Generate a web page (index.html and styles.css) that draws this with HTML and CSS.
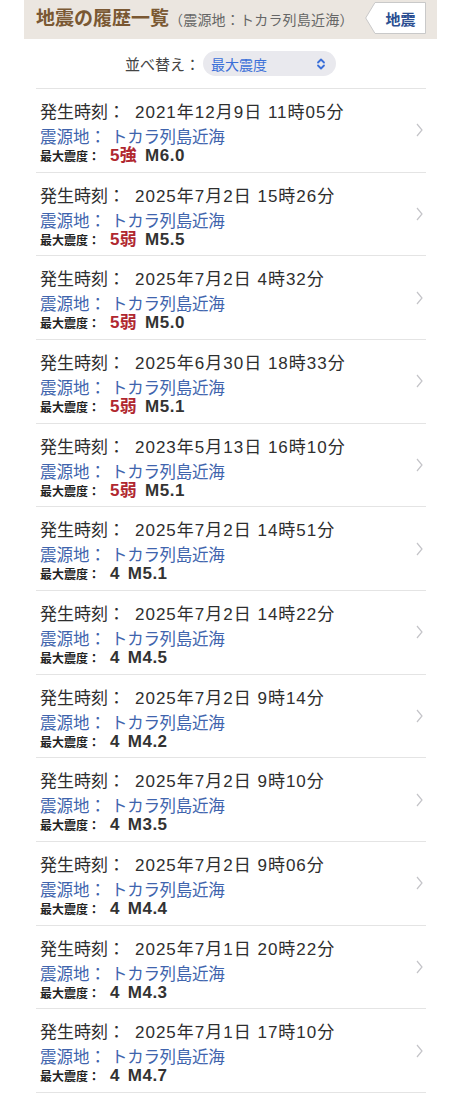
FILE: index.html
```html
<!DOCTYPE html>
<html lang="ja">
<head>
    <meta charset="UTF-8">
    <meta name="viewport" content="width=device-width, initial-scale=1.0">
    <title>地震の履歴一覧</title>
    <link rel="stylesheet" href="styles.css">
</head>
<body>
    <header class="page-head">
        <h1 class="title">地震の履歴一覧<span class="sub">（震源地：トカラ列島近海）</span></h1>
        <a class="tag" href="#">
            <svg class="tag-bg" viewBox="0 0 61 32" preserveAspectRatio="none">
                <polygon points="10,0.5 60.5,0.5 60.5,31.5 10,31.5 0.7,16" fill="#fff" stroke="#c9c9c9" stroke-width="1"/>
            </svg>
            <span class="tag-text">地震</span>
        </a>
    </header>

    <div class="sort">
        <span class="sort-label">並べ替え：</span>
        <div class="select">
            <span>最大震度</span>
            <svg class="updown" viewBox="0 0 10 12" width="10" height="12">
                <polyline points="2,4.5 5,1.5 8,4.5" fill="none" stroke="#3a6fd8" stroke-width="1.8" stroke-linecap="round" stroke-linejoin="round"/>
                <polyline points="2,7.5 5,10.5 8,7.5" fill="none" stroke="#3a6fd8" stroke-width="1.8" stroke-linecap="round" stroke-linejoin="round"/>
            </svg>
        </div>
    </div>

    <ul class="quakes">
        <li class="quake">
            <div class="info">
                <p class="time">発生時刻：<span class="val">2021年12月9日 11時05分</span></p>
                <p class="epi">震源地：<span class="val">トカラ列島近海</span></p>
                <p class="scale"><span class="lbl">最大震度：</span><span class="int high">5強</span><span class="mag">M6.0</span></p>
            </div>
            <svg class="chev" viewBox="0 0 7 14" width="7" height="14"><polyline points="1,1 6,7 1,13" fill="none" stroke="#c4c4c8" stroke-width="1.2"/></svg>
        </li>
        <li class="quake">
            <div class="info">
                <p class="time">発生時刻：<span class="val">2025年7月2日 15時26分</span></p>
                <p class="epi">震源地：<span class="val">トカラ列島近海</span></p>
                <p class="scale"><span class="lbl">最大震度：</span><span class="int high">5弱</span><span class="mag">M5.5</span></p>
            </div>
            <svg class="chev" viewBox="0 0 7 14" width="7" height="14"><polyline points="1,1 6,7 1,13" fill="none" stroke="#c4c4c8" stroke-width="1.2"/></svg>
        </li>
        <li class="quake">
            <div class="info">
                <p class="time">発生時刻：<span class="val">2025年7月2日 4時32分</span></p>
                <p class="epi">震源地：<span class="val">トカラ列島近海</span></p>
                <p class="scale"><span class="lbl">最大震度：</span><span class="int high">5弱</span><span class="mag">M5.0</span></p>
            </div>
            <svg class="chev" viewBox="0 0 7 14" width="7" height="14"><polyline points="1,1 6,7 1,13" fill="none" stroke="#c4c4c8" stroke-width="1.2"/></svg>
        </li>
        <li class="quake">
            <div class="info">
                <p class="time">発生時刻：<span class="val">2025年6月30日 18時33分</span></p>
                <p class="epi">震源地：<span class="val">トカラ列島近海</span></p>
                <p class="scale"><span class="lbl">最大震度：</span><span class="int high">5弱</span><span class="mag">M5.1</span></p>
            </div>
            <svg class="chev" viewBox="0 0 7 14" width="7" height="14"><polyline points="1,1 6,7 1,13" fill="none" stroke="#c4c4c8" stroke-width="1.2"/></svg>
        </li>
        <li class="quake">
            <div class="info">
                <p class="time">発生時刻：<span class="val">2023年5月13日 16時10分</span></p>
                <p class="epi">震源地：<span class="val">トカラ列島近海</span></p>
                <p class="scale"><span class="lbl">最大震度：</span><span class="int high">5弱</span><span class="mag">M5.1</span></p>
            </div>
            <svg class="chev" viewBox="0 0 7 14" width="7" height="14"><polyline points="1,1 6,7 1,13" fill="none" stroke="#c4c4c8" stroke-width="1.2"/></svg>
        </li>
        <li class="quake">
            <div class="info">
                <p class="time">発生時刻：<span class="val">2025年7月2日 14時51分</span></p>
                <p class="epi">震源地：<span class="val">トカラ列島近海</span></p>
                <p class="scale"><span class="lbl">最大震度：</span><span class="int">4</span><span class="mag">M5.1</span></p>
            </div>
            <svg class="chev" viewBox="0 0 7 14" width="7" height="14"><polyline points="1,1 6,7 1,13" fill="none" stroke="#c4c4c8" stroke-width="1.2"/></svg>
        </li>
        <li class="quake">
            <div class="info">
                <p class="time">発生時刻：<span class="val">2025年7月2日 14時22分</span></p>
                <p class="epi">震源地：<span class="val">トカラ列島近海</span></p>
                <p class="scale"><span class="lbl">最大震度：</span><span class="int">4</span><span class="mag">M4.5</span></p>
            </div>
            <svg class="chev" viewBox="0 0 7 14" width="7" height="14"><polyline points="1,1 6,7 1,13" fill="none" stroke="#c4c4c8" stroke-width="1.2"/></svg>
        </li>
        <li class="quake">
            <div class="info">
                <p class="time">発生時刻：<span class="val">2025年7月2日 9時14分</span></p>
                <p class="epi">震源地：<span class="val">トカラ列島近海</span></p>
                <p class="scale"><span class="lbl">最大震度：</span><span class="int">4</span><span class="mag">M4.2</span></p>
            </div>
            <svg class="chev" viewBox="0 0 7 14" width="7" height="14"><polyline points="1,1 6,7 1,13" fill="none" stroke="#c4c4c8" stroke-width="1.2"/></svg>
        </li>
        <li class="quake">
            <div class="info">
                <p class="time">発生時刻：<span class="val">2025年7月2日 9時10分</span></p>
                <p class="epi">震源地：<span class="val">トカラ列島近海</span></p>
                <p class="scale"><span class="lbl">最大震度：</span><span class="int">4</span><span class="mag">M3.5</span></p>
            </div>
            <svg class="chev" viewBox="0 0 7 14" width="7" height="14"><polyline points="1,1 6,7 1,13" fill="none" stroke="#c4c4c8" stroke-width="1.2"/></svg>
        </li>
        <li class="quake">
            <div class="info">
                <p class="time">発生時刻：<span class="val">2025年7月2日 9時06分</span></p>
                <p class="epi">震源地：<span class="val">トカラ列島近海</span></p>
                <p class="scale"><span class="lbl">最大震度：</span><span class="int">4</span><span class="mag">M4.4</span></p>
            </div>
            <svg class="chev" viewBox="0 0 7 14" width="7" height="14"><polyline points="1,1 6,7 1,13" fill="none" stroke="#c4c4c8" stroke-width="1.2"/></svg>
        </li>
        <li class="quake">
            <div class="info">
                <p class="time">発生時刻：<span class="val">2025年7月1日 20時22分</span></p>
                <p class="epi">震源地：<span class="val">トカラ列島近海</span></p>
                <p class="scale"><span class="lbl">最大震度：</span><span class="int">4</span><span class="mag">M4.3</span></p>
            </div>
            <svg class="chev" viewBox="0 0 7 14" width="7" height="14"><polyline points="1,1 6,7 1,13" fill="none" stroke="#c4c4c8" stroke-width="1.2"/></svg>
        </li>
        <li class="quake">
            <div class="info">
                <p class="time">発生時刻：<span class="val">2025年7月1日 17時10分</span></p>
                <p class="epi">震源地：<span class="val">トカラ列島近海</span></p>
                <p class="scale"><span class="lbl">最大震度：</span><span class="int">4</span><span class="mag">M4.7</span></p>
            </div>
            <svg class="chev" viewBox="0 0 7 14" width="7" height="14"><polyline points="1,1 6,7 1,13" fill="none" stroke="#c4c4c8" stroke-width="1.2"/></svg>
        </li>
    </ul>
</body>
</html>
```

FILE: styles.css
```css
body {
    margin: 0;
    background: #fff;
    color: #333;
    font-family: "Liberation Sans", "Noto Sans CJK JP", sans-serif;
}
p {
    margin: 0;
}

/* header */
.page-head {
    display: flex;
    align-items: center;
    justify-content: space-between;
    margin: 0 22px 0 24px;
    height: 39px;
    padding: 0 11px 0 12px;
    background: #ebe6e0;
}
.title {
    margin: 0;
    font-size: 19px;
    line-height: 39px;
    font-weight: bold;
    color: #7a5833;
    white-space: nowrap;
}
.sub {
    font-size: 14px;
    letter-spacing: 0.2px;
    font-weight: normal;
    color: #666;
}
.tag {
    position: relative;
    display: flex;
    flex-shrink: 0;
    align-items: center;
    justify-content: center;
    width: 61px;
    height: 32px;
    padding-left: 10px;
    box-sizing: border-box;
    margin-top: -3px;
    text-decoration: none;
}
.tag-bg {
    position: absolute;
    left: 0;
    top: 0;
    width: 61px;
    height: 32px;
}
.tag-text {
    position: relative;
    font-size: 15px;
    font-weight: bold;
    color: #2c4f92;
}

/* sort */
.sort {
    display: flex;
    justify-content: center;
    align-items: center;
    padding: 12px 0;
    margin-left: 2px;
}
.sort-label {
    font-size: 15px;
    color: #444;
}
.select {
    display: flex;
    align-items: center;
    justify-content: space-between;
    width: 133px;
    height: 25px;
    box-sizing: border-box;
    padding: 0 10px 0 8px;
    margin-left: 3px;
    border-radius: 13px;
    background: #e9e9ee;
    font-size: 14px;
    color: #3a6fd8;
}

/* list */
.quakes {
    list-style: none;
    margin: 0 33px 0 36px;
    padding: 0;
    border-top: 1px solid #e4e4e4;
}
.quake {
    display: flex;
    align-items: flex-start;
    justify-content: space-between;
    height: 83.67px;
    box-sizing: border-box;
    padding: 12px 4px 0;
    border-bottom: 1px solid #e4e4e4;
}
.time {
    font-size: 17px;
    line-height: 24px;
    color: #2e2e2e;
}
.time .val {
    margin-left: 10px;
    letter-spacing: 1px;
}
.epi {
    font-size: 16.5px;
    line-height: 24px;
    color: #4064ad;
}
.epi .val {
    margin-left: 5px;
    letter-spacing: -0.3px;
}
.scale {
    font-size: 12px;
    line-height: 14px;
    font-weight: bold;
    color: #222;
}
.int {
    margin-left: 10px;
    font-size: 17px;
    letter-spacing: 0.3px;
    color: #333;
}
.int.high {
    color: #b0272f;
}
.mag {
    margin-left: 8px;
    font-size: 17px;
    letter-spacing: 0.5px;
    color: #333;
}
.chev {
    align-self: center;
    margin: -12px -1px 0 0;
}
```
